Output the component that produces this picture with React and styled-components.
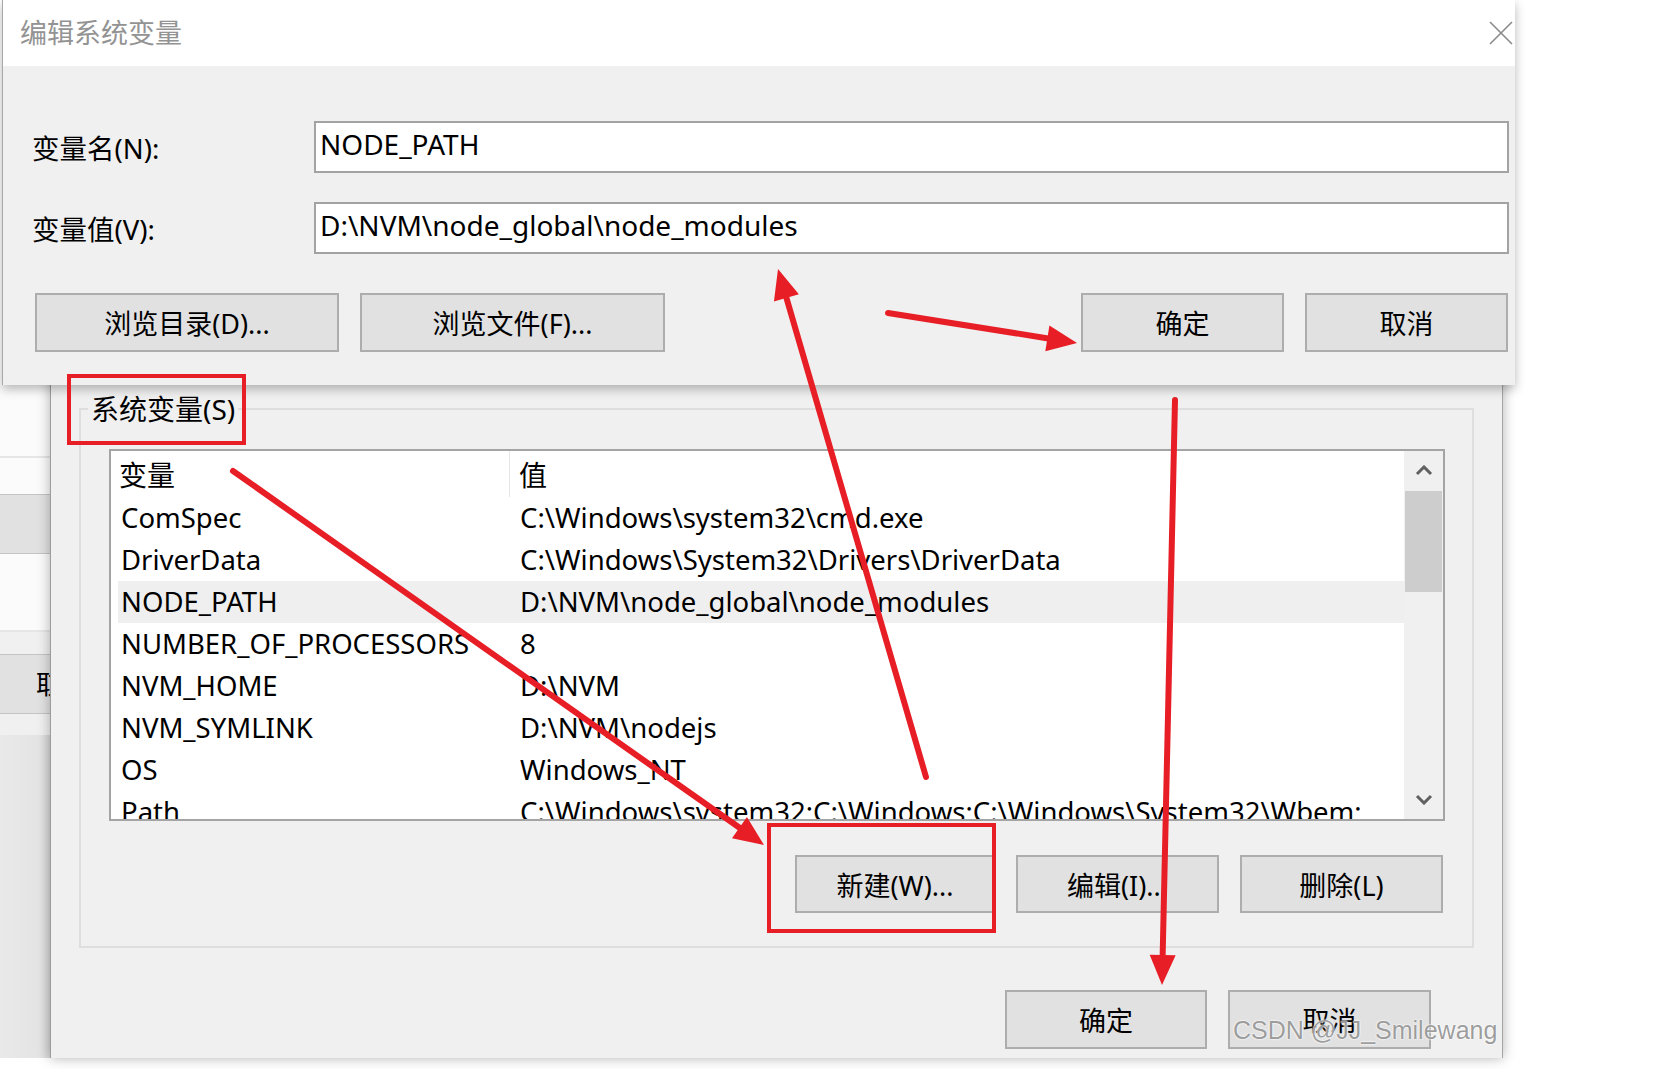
import React from 'react';
import styled, { createGlobalStyle } from 'styled-components';

const UI_FONT = `"Noto Sans", "Noto Sans CJK SC", sans-serif`;
const RED = '#e81e26';

const GlobalStyle = createGlobalStyle`
  html, body {
    margin: 0;
    padding: 0;
    background: #fff;
  }
  body {
    font-family: ${UI_FONT};
    color: #000;
  }
  * {
    box-sizing: border-box;
  }
`;

const variables = [
  { name: 'ComSpec', value: 'C:\\Windows\\system32\\cmd.exe' },
  { name: 'DriverData', value: 'C:\\Windows\\System32\\Drivers\\DriverData' },
  { name: 'NODE_PATH', value: 'D:\\NVM\\node_global\\node_modules', selected: true },
  { name: 'NUMBER_OF_PROCESSORS', value: '8' },
  { name: 'NVM_HOME', value: 'D:\\NVM' },
  { name: 'NVM_SYMLINK', value: 'D:\\NVM\\nodejs' },
  { name: 'OS', value: 'Windows_NT' },
  { name: 'Path', value: 'C:\\Windows\\system32;C:\\Windows;C:\\Windows\\System32\\Wbem;' },
];

const sideBlocks = [
  { kind: 'white', h: 73, line: true },
  { kind: 'white', h: 36 },
  { kind: 'button', h: 60 },
  { kind: 'white', h: 78, line: true },
  { kind: 'plain', h: 22 },
  { kind: 'button', h: 60, label: '取' },
  { kind: 'plain', h: 21 },
];

const arrows = [
  { from: [233, 471], to: [764, 845] },
  { from: [926, 777], to: [778, 269] },
  { from: [888, 313], to: [1077, 343] },
  { from: [1175, 400], to: [1162, 985] },
];

const arrowShape = ({ from, to }) => {
  const dx = to[0] - from[0];
  const dy = to[1] - from[1];
  const len = Math.hypot(dx, dy);
  const ux = dx / len;
  const uy = dy / len;
  const bx = to[0] - ux * 30;
  const by = to[1] - uy * 30;
  const px = -uy * 13;
  const py = ux * 13;
  return {
    line: [from[0], from[1], bx + ux * 4, by + uy * 4],
    head: `${to[0]},${to[1]} ${bx + px},${by + py} ${bx - px},${by - py}`,
  };
};

const Chevron = ({ down }) => (
  <svg width='18' height='12' viewBox='0 0 18 12'>
    <path
      d={down ? 'M2 3 L9 10 L16 3' : 'M2 9 L9 2 L16 9'}
      fill='none'
      stroke='#606060'
      strokeWidth='3'
    />
  </svg>
);

const App = () => {
  return (
    <>
      <GlobalStyle />
      <Desktop>
        <SideWindow>
          {sideBlocks.map((b, i) => (
            <SideBlock key={i} kind={b.kind} h={b.h} line={b.line ? 1 : 0}>
              {b.label && <SideLabel>{b.label}</SideLabel>}
            </SideBlock>
          ))}
          <SideRest />
        </SideWindow>

        <BackWindow>
          <GroupBox>
            <GroupLegend>系统变量(S)</GroupLegend>
            <ListView>
              <ListBody>
                <HeaderRow>
                  <HeaderCell first>变量</HeaderCell>
                  <HeaderCell>值</HeaderCell>
                </HeaderRow>
                {variables.map((v) => (
                  <Row key={v.name} selected={v.selected ? 1 : 0}>
                    <Cell>{v.name}</Cell>
                    <Cell>{v.value}</Cell>
                  </Row>
                ))}
              </ListBody>
              <ScrollBar>
                <ScrollButton>
                  <Chevron />
                </ScrollButton>
                <ScrollThumb />
                <ScrollTrack />
                <ScrollButton>
                  <Chevron down />
                </ScrollButton>
              </ScrollBar>
            </ListView>
            <ButtonRow>
              <WinButton w={200}>新建(W)...</WinButton>
              <WinButton w={203}>编辑(I)...</WinButton>
              <WinButton w={203}>删除(L)</WinButton>
            </ButtonRow>
          </GroupBox>
          <FooterRow>
            <WinButton w={202} h={59}>确定</WinButton>
            <WinButton w={203} h={59}>取消</WinButton>
          </FooterRow>
        </BackWindow>

        <EditDialog>
          <TitleBar>
            <Title>编辑系统变量</Title>
            <CloseButton>
              <svg width='24' height='24' viewBox='0 0 24 24'>
                <path d='M1 1 L23 23 M23 1 L1 23' stroke='#8a8a8a' strokeWidth='1.6' />
              </svg>
            </CloseButton>
          </TitleBar>
          <DialogBody>
            <FieldRow>
              <FieldLabel>变量名(N):</FieldLabel>
              <TextBox>NODE_PATH</TextBox>
            </FieldRow>
            <FieldRow>
              <FieldLabel>变量值(V):</FieldLabel>
              <TextBox>D:\NVM\node_global\node_modules</TextBox>
            </FieldRow>
            <DialogButtons>
              <WinButton w={304} h={59}>浏览目录(D)...</WinButton>
              <WinButton w={305} h={59}>浏览文件(F)...</WinButton>
              <Spacer />
              <WinButton w={203} h={59}>确定</WinButton>
              <WinButton w={203} h={59}>取消</WinButton>
            </DialogButtons>
          </DialogBody>
        </EditDialog>

        <MarkBox style={{ left: 67, top: 374, width: 179, height: 71 }} />
        <MarkBox style={{ left: 767, top: 823, width: 229, height: 110 }} />

        <ArrowLayer width='1656' height='1069' viewBox='0 0 1656 1069'>
          {arrows.map((a, i) => {
            const s = arrowShape(a);
            return (
              <g key={i}>
                <line
                  x1={s.line[0]}
                  y1={s.line[1]}
                  x2={s.line[2]}
                  y2={s.line[3]}
                  stroke={RED}
                  strokeWidth='6'
                  strokeLinecap='round'
                />
                <polygon points={s.head} fill={RED} />
              </g>
            );
          })}
        </ArrowLayer>

        <Watermark>CSDN @JJ_Smilewang</Watermark>
      </Desktop>
    </>
  );
};

const Desktop = styled.div`
  position: relative;
  width: 1656px;
  height: 1069px;
  overflow: hidden;
  background: #fff;
`;

const SideWindow = styled.div`
  position: absolute;
  left: 0;
  top: 385px;
  width: 50px;
  height: 673px;
  display: flex;
  flex-direction: column;
  overflow: hidden;
`;

const SideBlock = styled.div`
  position: relative;
  flex: 0 0 ${({ h }) => h}px;
  background: ${({ kind }) =>
    kind === 'button' ? '#e1e1e1' : kind === 'plain' ? '#f0f0f0' : '#fbfbfb'};
  border-top: ${({ kind }) => (kind === 'button' ? '1px solid #c4c4c4' : 'none')};
  border-bottom: ${({ kind, line }) =>
    kind === 'button' ? '1px solid #c4c4c4' : line ? '2px solid #e6e6e6' : 'none'};
`;

const SideLabel = styled.span`
  position: absolute;
  left: 36px;
  top: 50%;
  transform: translateY(-52%);
  font-size: 26px;
  line-height: 1;
  font-family: "Noto Sans CJK SC", serif;
`;

const SideRest = styled.div`
  flex: 1;
  background: linear-gradient(90deg, #e9e9e9 0%, #e4e4e4 80%, #d6d6d6 100%);
`;

const BackWindow = styled.div`
  position: absolute;
  left: 50px;
  top: 360px;
  width: 1453px;
  height: 698px;
  background: #f0f0f0;
  border-left: 1px solid #9c9c9c;
  border-right: 1px solid #a6a6a6;
  box-shadow: 0 0 12px rgba(0, 0, 0, 0.3);
  padding: 32px 28px 0 28px;
  display: flex;
  flex-direction: column;
`;

const GroupBox = styled.fieldset`
  margin: 0;
  padding: 0 27px 33px 28px;
  border: 2px solid #dedede;
  min-width: 0;
`;

const GroupLegend = styled.legend`
  margin-left: -21px;
  padding: 0 3px;
  font-size: 28px;
  line-height: 34px;
  height: 34px;
`;

const ListView = styled.div`
  margin-top: 23px;
  height: 372px;
  display: flex;
  background: #fff;
  border: 2px solid #a4a4a4;
  overflow: hidden;
`;

const ListBody = styled.div`
  flex: 1;
  min-width: 0;
  overflow: hidden;
`;

const HeaderRow = styled.div`
  height: 46px;
  display: grid;
  grid-template-columns: 399px 1fr;
  align-items: stretch;
`;

const HeaderCell = styled.div`
  display: flex;
  align-items: center;
  font-size: 28px;
  padding-left: ${({ first }) => (first ? 8 : 9)}px;
  border-right: ${({ first }) => (first ? '1px solid #e6e6e6' : 'none')};
`;

const Row = styled.div`
  height: 42px;
  margin-left: 7px;
  padding-left: 3px;
  display: grid;
  grid-template-columns: 399px 1fr;
  align-items: center;
  background: ${({ selected }) => (selected ? '#efefef' : 'transparent')};
`;

const Cell = styled.div`
  font-size: 27.5px;
  line-height: 42px;
  white-space: nowrap;
  overflow: hidden;
`;

const ScrollBar = styled.div`
  flex: 0 0 39px;
  display: flex;
  flex-direction: column;
  background: #f0f0f0;
`;

const ScrollButton = styled.div`
  flex: 0 0 40px;
  display: flex;
  align-items: center;
  justify-content: center;
`;

const ScrollThumb = styled.div`
  flex: 0 0 101px;
  margin: 0 1px;
  background: #cdcdcd;
`;

const ScrollTrack = styled.div`
  flex: 1;
`;

const ButtonRow = styled.div`
  margin-top: 34px;
  display: flex;
  justify-content: flex-end;
  gap: 21px;
  padding-right: 2px;
`;

const FooterRow = styled.div`
  margin-top: 42px;
  display: flex;
  justify-content: flex-end;
  gap: 21px;
  padding-right: 43px;
`;

const WinButton = styled.button`
  width: ${({ w }) => w}px;
  height: ${({ h }) => h || 58}px;
  padding: 0;
  background: #e1e1e1;
  border: 2px solid #adadad;
  color: #000;
  font-family: ${UI_FONT};
  font-size: 27px;
  display: flex;
  align-items: center;
  justify-content: center;
`;

const EditDialog = styled.div`
  position: absolute;
  left: 2px;
  top: 0;
  width: 1513px;
  height: 385px;
  display: flex;
  flex-direction: column;
  border-left: 1px solid #a8a8a8;
  box-shadow: 0 4px 10px rgba(0, 0, 0, 0.28);
  z-index: 2;
`;

const TitleBar = styled.div`
  flex: 0 0 66px;
  background: #fff;
  display: flex;
  align-items: center;
  justify-content: space-between;
  padding: 0 2px 0 17px;
`;

const Title = styled.div`
  font-size: 27px;
  color: #939393;
  padding-bottom: 3px;
`;

const CloseButton = styled.div`
  width: 24px;
  height: 24px;
  display: flex;
`;

const DialogBody = styled.div`
  flex: 1;
  background: #f0f0f0;
  padding: 55px 6px 0 0;
  display: flex;
  flex-direction: column;
  gap: 29px;
`;

const FieldRow = styled.div`
  display: grid;
  grid-template-columns: 311px 1fr;
  height: 52px;
  align-items: center;
`;

const FieldLabel = styled.div`
  padding-left: 29px;
  font-size: 27.5px;
`;

const TextBox = styled.div`
  height: 52px;
  background: #fff;
  border: 2px solid #a3a3a3;
  padding: 0 0 6px 4px;
  display: flex;
  align-items: center;
  font-size: 28px;
  white-space: nowrap;
`;

const DialogButtons = styled.div`
  margin-top: 10px;
  display: flex;
  gap: 21px;
  padding-left: 32px;
  padding-right: 1px;
`;

const Spacer = styled.div`
  flex: 1;
`;

const MarkBox = styled.div`
  position: absolute;
  border: 4px solid ${RED};
  z-index: 3;
  pointer-events: none;
`;

const ArrowLayer = styled.svg`
  position: absolute;
  left: 0;
  top: 0;
  z-index: 4;
  pointer-events: none;
`;

const Watermark = styled.div`
  position: absolute;
  left: 1233px;
  top: 1016px;
  z-index: 5;
  font-family: "Liberation Sans", Arial, sans-serif;
  font-size: 25px;
  color: rgba(140, 140, 140, 0.85);
  text-shadow: 0 0 2px #fff, 0 0 2px #fff;
  white-space: nowrap;
`;

export default App;
